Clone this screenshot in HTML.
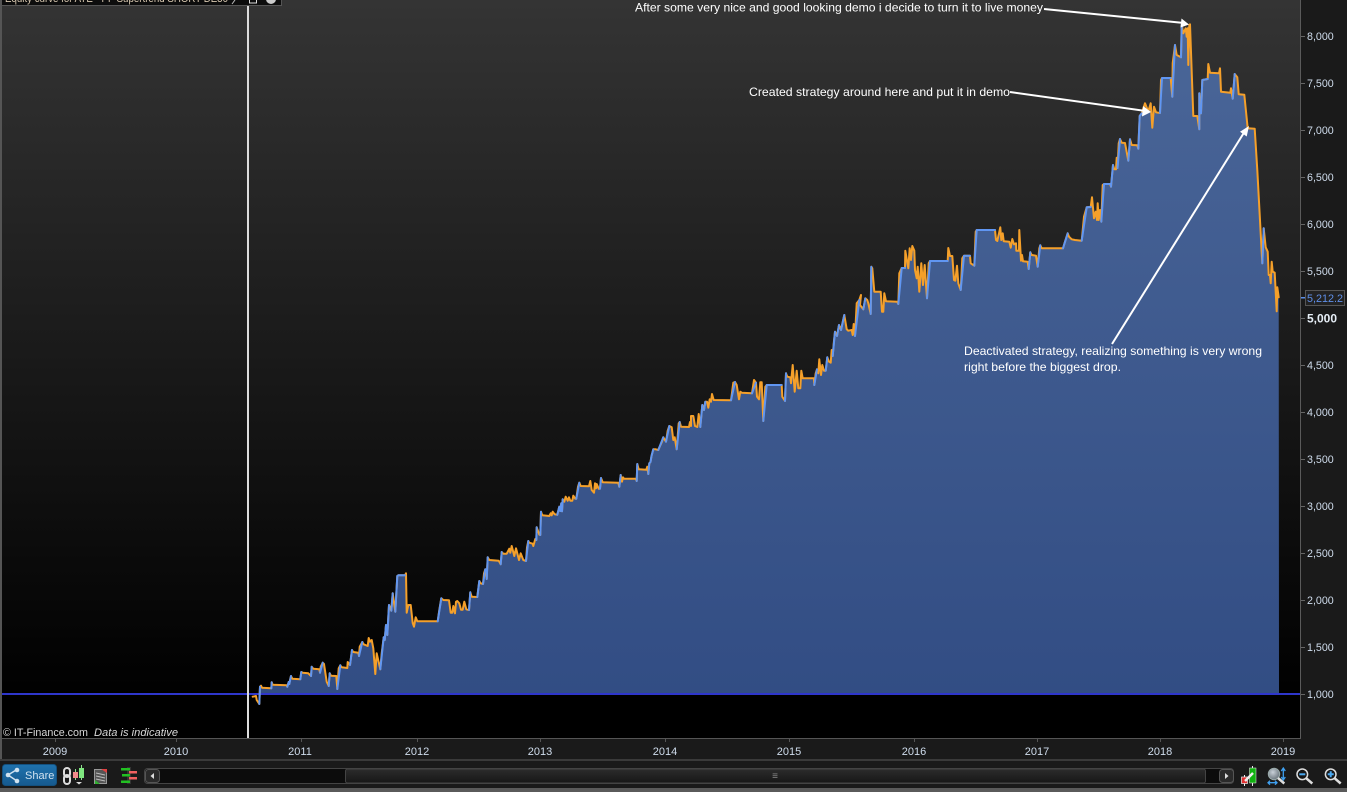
<!DOCTYPE html>
<html>
<head>
<meta charset="utf-8">
<style>
html,body{margin:0;padding:0;background:#1a1a1a;width:1347px;height:792px;overflow:hidden;font-family:"Liberation Sans",sans-serif}
svg{position:absolute;left:0;top:0;display:block}
</style>
</head>
<body>
<svg width="1347" height="792" viewBox="0 0 1347 792" xmlns="http://www.w3.org/2000/svg" font-family="'Liberation Sans',sans-serif">
<defs>
<linearGradient id="bg" gradientUnits="userSpaceOnUse" x1="0" y1="0" x2="0" y2="700"><stop offset="0" stop-color="#343434"/><stop offset="1" stop-color="#000"/></linearGradient>
<linearGradient id="area" gradientUnits="userSpaceOnUse" x1="0" y1="24" x2="0" y2="694"><stop offset="0" stop-color="#4a6698"/><stop offset="1" stop-color="#324d84"/></linearGradient>
<linearGradient id="share" x1="0" y1="0" x2="0" y2="1"><stop offset="0" stop-color="#1f72ad"/><stop offset="1" stop-color="#165a8f"/></linearGradient>
<linearGradient id="thumb" x1="0" y1="0" x2="0" y2="1"><stop offset="0" stop-color="#2c2c2c"/><stop offset="1" stop-color="#171717"/></linearGradient>
<radialGradient id="glass" cx=".4" cy=".35" r=".7"><stop offset="0" stop-color="#c8d0d8"/><stop offset="1" stop-color="#667078"/></radialGradient>
</defs>

<!-- panels -->
<rect width="1347" height="792" fill="#1a1a1a"/>
<rect x="2" y="0" width="1298" height="738" fill="url(#bg)"/>
<rect x="0" y="0" width="2" height="760" fill="#555"/>
<rect x="1300" y="0" width="1" height="739" fill="#5a5a5a"/>
<rect x="0" y="738" width="1301" height="1" fill="#555"/>
<rect x="0" y="759" width="1347" height="2" fill="#3a3a3a"/>
<rect x="0" y="788" width="1347" height="4" fill="#5a5a5a"/>

<!-- title strip -->
<rect x="2" y="0" width="279" height="5" fill="#0d0d0d"/>
<rect x="2" y="5" width="280" height="1" fill="#555"/>
<rect x="281" y="0" width="1" height="6" fill="#555"/>
<text x="5" y="2" font-size="11" fill="#d8c8b0" textLength="223" lengthAdjust="spacingAndGlyphs">Equity curve for ATE - PF Supertrend SHORT DE30</text>
<path d="M232,4l3,-4" stroke="#bbb" fill="none"/>
<rect x="249.500" y="-4" width="7" height="7" fill="none" stroke="#ddd" stroke-width="1"/>
<circle cx="271" cy="-1" r="5" fill="#ccc"/>

<!-- area -->
<path fill="url(#area)" d="M260,694L260,686.7 261,685.7 262,687.7 271.3,688.3 271.7,682.3 272.7,684.7 286.7,685.3 287.3,686.7 288.7,682 289.3,684 290,680 291,676 292.3,678.7 300.3,679.3 301.3,672 302.7,672.7 308.3,673.3 311,676 311.7,666.7 313.3,668.7 319.3,669.3 320,672.7 320.7,666.7 322.7,662.7 324,664 326.7,681.7 328.7,686 329.7,673.3 331,675.7 336.3,676 337.3,689 338.7,668.3 340.3,665.3 341.7,667.3 347.3,668 347.7,662 350,665 352,650 353.3,652 358.3,652.7 359,656 359.7,646.7 362.3,642 363.7,644.3 367.7,646 368.7,638 370,641.7 371.7,640 373.3,648.3 375.3,674 376.7,653.3 380.3,669.3 381.7,653.3 383.7,637.3 384.7,640 386,625 387.3,635 389,605 391.3,610.7 392.7,593.3 395.3,611.7 397.3,576 398.3,575.3 405,575.3 406,573.3 406.7,612.7 408.3,605 410.7,605 412.7,623 414,626.7 415.7,617.3 417.3,621.3 437.7,621.3 439.3,610 441.3,598.3 443.3,600 449,600.3 450.7,612.7 452.3,612.7 453.3,606 455,613.3 456,601.7 457.3,601 459.3,603.3 461,609.7 462.7,609.7 464.3,601.7 466.3,609.3 469,610 470.3,592.3 471.7,596.7 477.3,597 479.3,581 480.7,583.3 483,584 484,573.3 485.3,569.3 486.7,579 487.7,557.3 489.3,560 498.7,560.7 500.7,564.3 501.7,552 503.3,553.7 506.7,553.7 509.3,548.7 510.3,552.7 511.7,546 514.3,556 516,548.3 519,560 520.7,553.3 523.3,560 526,561 527,547.3 528.3,541 529.3,542.7 532.7,543.7 533.3,546 535.3,539 536.3,540 536.7,527.3 539.3,534.7 540.3,535 541,511.7 542.3,515.3 549.3,516 550.7,513.3 551.7,515.3 552.7,511.7 554.7,514.3 557.3,514.7 559.3,506.7 560.3,511 561.3,503.3 562,511.3 562.7,499.3 564.3,501.7 565.7,496.7 567.7,500.7 569,497.3 570.3,500.7 572.3,500.7 573.3,495.7 575.3,498.7 576.3,498.7 578,486.7 579.3,482.7 580.7,486 589,486.3 590.3,481 591.7,490 594,492.7 595,483.3 596,488.3 596.7,484 598.7,488.7 600,488.7 601,478 602.7,482.3 618.3,482.7 619.3,486.7 620.7,475 622,481.7 623,477.3 624,478.7 635.7,478.7 636.7,481 637.3,464 638.7,469.3 646.3,469.7 647.3,466.7 648.3,474 649.3,463.3 650.5,462 651.5,456 653.3,449.3 655.7,449.3 658.3,450 660,446 662,441.7 663.3,437.3 666,441.7 667.7,430.7 669.3,426 671.7,427.3 673.3,440 674.7,437.3 676.7,449.3 678.7,423.3 679.7,422 681,426.7 689,427 690,422 691,426 691,416 693.3,416 695,426 697.3,427 698.7,414 700.3,427 702.3,405 704,410 705.3,401.7 707,401.7 708.3,407.7 709.7,399.3 711,401.7 712,394 713.7,400 731,400.3 733.3,382.7 735,382 736.7,385 739,399.3 740.3,391.7 741.7,392.7 752,393.3 754,380 756,382.7 757,396.7 759,399.3 760.3,382.3 761.7,382.3 763.3,421 765.3,386.7 766.7,385 781.7,385 782.3,396.7 785,401 786,373.3 787.3,376.7 790.3,377.3 791,383.3 792.7,365 794.7,391.7 796.7,370.7 798.3,388.3 800.3,388.3 801.3,370.7 802.7,378.3 814,378.3 814.3,385 815.7,373.3 817,369.3 818.3,373.3 819.3,359.3 821,375 822.3,365 824,370.7 825.7,370.7 827.3,357.3 829,361.7 830.7,362.7 831.7,350 832.7,356 834,340.7 835,331.7 837,336 839,325 841,330 844.3,315 846.7,329.3 848.3,330.7 851.7,330 852.7,335 853.7,324 855,336 856.7,303.3 859.3,300 861,295 860,305 863.3,309.3 865.3,298.3 867.3,300 868.3,303.3 870.7,314 871.3,266.7 872.3,268.3 874.3,291.7 880.7,291.7 882,311.7 883.3,311.7 884.3,293.3 886,301.3 897.3,301.7 898.3,304 899.3,273.3 901.7,268 905,268 905.3,250.7 908.3,268.3 909.7,248.3 911,260 912.3,246 914.3,250.7 915,270 916.7,278.3 917.7,266.7 919.3,291.7 921.3,263.3 923,285 924.7,265 927,298.3 928.7,263.3 930,261 947.7,261 948.3,248 950,256 952.3,256 954,280 955.3,280.7 957,265.7 958.3,283.3 960.7,290 962.3,258.3 964,255.7 970,255.7 970.7,263.3 974.3,265.7 975.7,231.7 976.7,230 995,230 996,240 997.3,241 1000.3,227.3 1001.3,240 1002.7,233.3 1003.7,241.3 1009.3,241.7 1010.7,247.7 1012.3,239 1014,244.3 1016,243.3 1016.3,250.7 1019,250.7 1019.3,230 1021,260.7 1022,255 1023,261.3 1027.7,261.7 1028.7,269 1030.3,252.3 1031.7,255 1036,255.7 1037.7,266.7 1039.3,248.3 1040.3,245.3 1041.7,248.3 1063,248.3 1065,241.7 1067.7,233.3 1069,236.7 1071.7,239.3 1075,240 1081.7,240.7 1084,216.7 1086.7,207.3 1090.7,207 1092,197.3 1094,218.3 1095.7,211.7 1097,220 1097.7,203.3 1098.7,220 1100,210 1101.3,221.7 1102.7,185 1104,184 1110,184 1111,186.7 1111.7,179.3 1113,165 1114.3,169.3 1116,169.3 1116.7,157.7 1117.5,168 1118.7,143.3 1120,139 1121.7,142.7 1125,143 1128.3,160.7 1130,139.3 1131.7,145 1137.3,145.3 1138.3,148.7 1139.7,116 1141.7,113.3 1145,103.3 1148.3,111.7 1150.7,103.3 1152.3,127.7 1154,106.7 1156,112.3 1160,113 1161,80 1162,78 1170.7,78 1172.3,96.7 1172.7,63.3 1175,45 1176.7,55 1181,57.3 1181.7,25 1183.3,33.3 1185.7,28.3 1186.7,36.7 1187.7,28.3 1188.3,65 1189.3,25 1190,24.3 1193.3,116 1197.3,116 1199.3,129.3 1199.3,93.3 1201,113.3 1202.3,80 1207.7,79 1208.3,64 1210,72.7 1219,73.3 1220,68.3 1221,91.7 1230.3,92.7 1231,88.3 1232.7,98.7 1234.7,74 1237.3,77.3 1238.7,94.3 1244.3,94.7 1247.7,128.3 1254.7,128.7 1257.3,170 1262.3,263.3 1263.7,228.3 1265.7,247.3 1267.7,251.7 1268.7,275 1270,275 1270.7,283.3 1271.7,261.7 1272.7,271.7 1274.7,272.7 1276.7,311.3 1277.3,287.3 1278.7,297.3 1279,694Z"/>

<!-- base line -->
<rect x="2" y="693" width="1298" height="2" fill="#2e36cc"/>

<!-- equity line, orange -->
<path fill="none" stroke="#f5a02a" stroke-width="2" stroke-linejoin="round" stroke-linecap="round" d="M252.7,696.7L256,696 256.7,700 259.3,704 260,686.7 261,685.7 262,687.7 271.3,688.3 271.7,682.3 272.7,684.7 286.7,685.3 287.3,686.7 288.7,682 289.3,684 290,680 291,676 292.3,678.7 300.3,679.3 301.3,672 302.7,672.7 308.3,673.3 311,676 311.7,666.7 313.3,668.7 319.3,669.3 320,672.7 320.7,666.7 322.7,662.7 324,664 326.7,681.7 328.7,686 329.7,673.3 331,675.7 336.3,676 337.3,689 338.7,668.3 340.3,665.3 341.7,667.3 347.3,668 347.7,662 350,665 352,650 353.3,652 358.3,652.7 359,656 359.7,646.7 362.3,642 363.7,644.3 367.7,646 368.7,638 370,641.7 371.7,640 373.3,648.3 375.3,674 376.7,653.3 380.3,669.3 381.7,653.3 383.7,637.3 384.7,640 386,625 387.3,635 389,605 391.3,610.7 392.7,593.3 395.3,611.7 397.3,576 398.3,575.3 405,575.3 406,573.3 406.7,612.7 408.3,605 410.7,605 412.7,623 414,626.7 415.7,617.3 417.3,621.3 437.7,621.3 439.3,610 441.3,598.3 443.3,600 449,600.3 450.7,612.7 452.3,612.7 453.3,606 455,613.3 456,601.7 457.3,601 459.3,603.3 461,609.7 462.7,609.7 464.3,601.7 466.3,609.3 469,610 470.3,592.3 471.7,596.7 477.3,597 479.3,581 480.7,583.3 483,584 484,573.3 485.3,569.3 486.7,579 487.7,557.3 489.3,560 498.7,560.7 500.7,564.3 501.7,552 503.3,553.7 506.7,553.7 509.3,548.7 510.3,552.7 511.7,546 514.3,556 516,548.3 519,560 520.7,553.3 523.3,560 526,561 527,547.3 528.3,541 529.3,542.7 532.7,543.7 533.3,546 535.3,539 536.3,540 536.7,527.3 539.3,534.7 540.3,535 541,511.7 542.3,515.3 549.3,516 550.7,513.3 551.7,515.3 552.7,511.7 554.7,514.3 557.3,514.7 559.3,506.7 560.3,511 561.3,503.3 562,511.3 562.7,499.3 564.3,501.7 565.7,496.7 567.7,500.7 569,497.3 570.3,500.7 572.3,500.7 573.3,495.7 575.3,498.7 576.3,498.7 578,486.7 579.3,482.7 580.7,486 589,486.3 590.3,481 591.7,490 594,492.7 595,483.3 596,488.3 596.7,484 598.7,488.7 600,488.7 601,478 602.7,482.3 618.3,482.7 619.3,486.7 620.7,475 622,481.7 623,477.3 624,478.7 635.7,478.7 636.7,481 637.3,464 638.7,469.3 646.3,469.7 647.3,466.7 648.3,474 649.3,463.3 650.5,462 651.5,456 653.3,449.3 655.7,449.3 658.3,450 660,446 662,441.7 663.3,437.3 666,441.7 667.7,430.7 669.3,426 671.7,427.3 673.3,440 674.7,437.3 676.7,449.3 678.7,423.3 679.7,422 681,426.7 689,427 690,422 691,426 691,416 693.3,416 695,426 697.3,427 698.7,414 700.3,427 702.3,405 704,410 705.3,401.7 707,401.7 708.3,407.7 709.7,399.3 711,401.7 712,394 713.7,400 731,400.3 733.3,382.7 735,382 736.7,385 739,399.3 740.3,391.7 741.7,392.7 752,393.3 754,380 756,382.7 757,396.7 759,399.3 760.3,382.3 761.7,382.3 763.3,421 765.3,386.7 766.7,385 781.7,385 782.3,396.7 785,401 786,373.3 787.3,376.7 790.3,377.3 791,383.3 792.7,365 794.7,391.7 796.7,370.7 798.3,388.3 800.3,388.3 801.3,370.7 802.7,378.3 814,378.3 814.3,385 815.7,373.3 817,369.3 818.3,373.3 819.3,359.3 821,375 822.3,365 824,370.7 825.7,370.7 827.3,357.3 829,361.7 830.7,362.7 831.7,350 832.7,356 834,340.7 835,331.7 837,336 839,325 841,330 844.3,315 846.7,329.3 848.3,330.7 851.7,330 852.7,335 853.7,324 855,336 856.7,303.3 859.3,300 861,295 860,305 863.3,309.3 865.3,298.3 867.3,300 868.3,303.3 870.7,314 871.3,266.7 872.3,268.3 874.3,291.7 880.7,291.7 882,311.7 883.3,311.7 884.3,293.3 886,301.3 897.3,301.7 898.3,304 899.3,273.3 901.7,268 905,268 905.3,250.7 908.3,268.3 909.7,248.3 911,260 912.3,246 914.3,250.7 915,270 916.7,278.3 917.7,266.7 919.3,291.7 921.3,263.3 923,285 924.7,265 927,298.3 928.7,263.3 930,261 947.7,261 948.3,248 950,256 952.3,256 954,280 955.3,280.7 957,265.7 958.3,283.3 960.7,290 962.3,258.3 964,255.7 970,255.7 970.7,263.3 974.3,265.7 975.7,231.7 976.7,230 995,230 996,240 997.3,241 1000.3,227.3 1001.3,240 1002.7,233.3 1003.7,241.3 1009.3,241.7 1010.7,247.7 1012.3,239 1014,244.3 1016,243.3 1016.3,250.7 1019,250.7 1019.3,230 1021,260.7 1022,255 1023,261.3 1027.7,261.7 1028.7,269 1030.3,252.3 1031.7,255 1036,255.7 1037.7,266.7 1039.3,248.3 1040.3,245.3 1041.7,248.3 1063,248.3 1065,241.7 1067.7,233.3 1069,236.7 1071.7,239.3 1075,240 1081.7,240.7 1084,216.7 1086.7,207.3 1090.7,207 1092,197.3 1094,218.3 1095.7,211.7 1097,220 1097.7,203.3 1098.7,220 1100,210 1101.3,221.7 1102.7,185 1104,184 1110,184 1111,186.7 1111.7,179.3 1113,165 1114.3,169.3 1116,169.3 1116.7,157.7 1117.5,168 1118.7,143.3 1120,139 1121.7,142.7 1125,143 1128.3,160.7 1130,139.3 1131.7,145 1137.3,145.3 1138.3,148.7 1139.7,116 1141.7,113.3 1145,103.3 1148.3,111.7 1150.7,103.3 1152.3,127.7 1154,106.7 1156,112.3 1160,113 1161,80 1162,78 1170.7,78 1172.3,96.7 1172.7,63.3 1175,45 1176.7,55 1181,57.3 1181.7,25 1183.3,33.3 1185.7,28.3 1186.7,36.7 1187.7,28.3 1188.3,65 1189.3,25 1190,24.3 1193.3,116 1197.3,116 1199.3,129.3 1199.3,93.3 1201,113.3 1202.3,80 1207.7,79 1208.3,64 1210,72.7 1219,73.3 1220,68.3 1221,91.7 1230.3,92.7 1231,88.3 1232.7,98.7 1234.7,74 1237.3,77.3 1238.7,94.3 1244.3,94.7 1247.7,128.3 1254.7,128.7 1257.3,170 1262.3,263.3 1263.7,228.3 1265.7,247.3 1267.7,251.7 1268.7,275 1270,275 1270.7,283.3 1271.7,261.7 1272.7,271.7 1274.7,272.7 1276.7,311.3 1277.3,287.3 1278.7,297.3"/>

<!-- equity line, blue rises -->
<path fill="none" stroke="#6096f2" stroke-width="2" stroke-linejoin="round" stroke-linecap="round" d="M259.3,704L260,686.7M271.3,688.3L271.7,682.3M287.3,686.7L288.7,682M289.3,684L291,676M300.3,679.3L301.3,672M311,676L311.7,666.7M320,672.7L322.7,662.7M328.7,686L329.7,673.3M337.3,689L340.3,665.3M350,665L352,650M359,656L362.3,642M380.3,669.3L383.7,637.3M384.7,640L386,625M387.3,635L389,605M391.3,610.7L392.7,593.3M395.3,611.7L397.3,576 398.3,575.3 405,575.3M437.7,621.3L441.3,598.3M469,610L470.3,592.3M477.3,597L479.3,581M483,584L485.3,569.3M486.7,579L487.7,557.3M500.7,564.3L501.7,552M526,561L528.3,541M536.3,540L536.7,527.3M540.3,535L541,511.7M557.3,514.7L559.3,506.7M560.3,511L561.3,503.3M562,511.3L562.7,499.3M576.3,498.7L579.3,482.7M600,488.7L601,478M619.3,486.7L620.7,475M636.7,481L637.3,464M648.3,474L649.3,463.3 650.5,462 651.5,456 653.3,449.3M658.3,450L663.3,437.3M666,441.7L669.3,426M676.7,449.3L679.7,422M700.3,427L702.3,405M704,410L705.3,401.7M731,400.3L735,382M752,393.3L756,382.7M763.3,421L766.7,385 781.7,385M785,401L786,373.3M814.3,385L817,369.3M825.7,370.7L827.3,357.3M832.7,356L835,331.7M837,336L839,325M841,330L844.3,315M855,336L859.3,300M863.3,309.3L865.3,298.3M870.7,314L871.3,266.7M898.3,304L901.7,268 905,268M927,298.3L930,261 947.7,261M960.7,290L964,255.7 970,255.7M974.3,265.7L976.7,230 995,230M1028.7,269L1030.3,252.3M1037.7,266.7L1040.3,245.3M1063,248.3L1067.7,233.3M1081.7,240.7L1086.7,207.3 1090.7,207M1101.3,221.7L1104,184 1110,184M1111,186.7L1113,165M1117.5,168L1120,139M1128.3,160.7L1130,139.3M1138.3,148.7L1139.7,116 1141.7,113.3M1160,113L1162,78 1170.7,78M1172.3,96.7L1175,45M1181,57.3L1181.7,25M1199.3,129.3L1199.3,93.3M1201,113.3L1202.3,80 1207.7,79M1232.7,98.7L1234.7,74M1262.3,263.3L1263.7,228.3"/>

<!-- white cursor line -->
<rect x="247" y="6" width="2" height="732" fill="#dcdcdc"/>

<!-- annotations -->
<g fill="#fff" font-size="12">
<text x="635" y="11.500" textLength="408" lengthAdjust="spacingAndGlyphs">After some very nice and good looking demo i decide to turn it to live money</text>
<text x="749" y="96" textLength="261" lengthAdjust="spacingAndGlyphs">Created strategy around here and put it in demo</text>
<text x="964" y="355" textLength="298" lengthAdjust="spacingAndGlyphs">Deactivated strategy, realizing something is very wrong</text>
<text x="964" y="371" textLength="157" lengthAdjust="spacingAndGlyphs">right before the biggest drop.</text>
</g>
<g stroke="#fff" stroke-width="2" fill="none">
<path d="M1044,9L1184,23"/>
<path d="M1010,92L1146,111"/>
<path d="M1112,344L1245,131"/>
</g>
<g fill="#fff">
<path d="M1189,24.500L1181.500,18.500 1180.500,27.500Z"/>
<path d="M1151,112L1143,106 1142,116.500Z"/>
<path d="M1249,126L1240,131.700 1246.700,136.500Z"/>
</g>

<!-- footer note -->
<text x="3" y="736" font-size="11" fill="#d8d8d8" textLength="85" lengthAdjust="spacingAndGlyphs">© IT-Finance.com</text>
<text x="94" y="736" font-size="11" font-style="italic" fill="#d8d8d8" textLength="84" lengthAdjust="spacingAndGlyphs">Data is indicative</text>

<!-- y axis -->
<path fill="none" stroke="#666" d="M1301,36.500h4M1301,83.500h4M1301,130.500h4M1301,177.500h4M1301,224.500h4M1301,271.500h4M1301,318.500h4M1301,365.500h4M1301,412.500h4M1301,459.500h4M1301,506.500h4M1301,553.500h4M1301,600.500h4M1301,647.500h4M1301,694.500h4"/>
<g fill="#cfdcec" font-size="10.700">
<text x="1307" y="40">8,000</text>
<text x="1307" y="87">7,500</text>
<text x="1307" y="134">7,000</text>
<text x="1307" y="181">6,500</text>
<text x="1307" y="228">6,000</text>
<text x="1307" y="275">5,500</text>
<text x="1307" y="322.500" font-size="12" font-weight="bold" fill="#e6eef6">5,000</text>
<text x="1307" y="369">4,500</text>
<text x="1307" y="416">4,000</text>
<text x="1307" y="463">3,500</text>
<text x="1307" y="510">3,000</text>
<text x="1307" y="557">2,500</text>
<text x="1307" y="604">2,000</text>
<text x="1307" y="651">1,500</text>
<text x="1307" y="698">1,000</text>
</g>
<rect x="1305.500" y="290.500" width="39" height="15" fill="#222" stroke="#555"/>
<rect x="1301" y="297" width="4" height="1.500" fill="#5b8ee8"/>
<text x="1307" y="302" font-size="11" fill="#5f8fe8" textLength="36" lengthAdjust="spacingAndGlyphs">5,212.2</text>

<!-- x axis -->
<path fill="none" stroke="#555" d="M55.500,739v3M176.500,739v3M301.500,739v3M417.500,739v3M540.500,739v3M665.500,739v3M789.500,739v3M914.500,739v3M1037.500,739v3M1160.500,739v3M1283.500,739v3"/>
<g fill="#cfdcec" font-size="11" text-anchor="middle">
<text x="55" y="755">2009</text>
<text x="176" y="755">2010</text>
<text x="300" y="755">2011</text>
<text x="417" y="755">2012</text>
<text x="540" y="755">2013</text>
<text x="665" y="755">2014</text>
<text x="789" y="755">2015</text>
<text x="914" y="755">2016</text>
<text x="1037" y="755">2017</text>
<text x="1160" y="755">2018</text>
<text x="1283" y="755">2019</text>
</g>

<!-- share button -->
<rect x="2.500" y="764.500" width="54" height="21" rx="3" fill="url(#share)" stroke="#14507e"/>
<g fill="#cfe2f0" stroke="#cfe2f0">
<path d="M8,775L17,769.500M8,775L17,781" fill="none" stroke-width="1.500"/>
<circle cx="8" cy="775" r="2.300" stroke="none"/>
<circle cx="17" cy="770" r="2.300" stroke="none"/>
<circle cx="17" cy="781" r="2.300" stroke="none"/>
</g>
<text x="25" y="779" font-size="11" fill="#cfe2f0">Share</text>

<!-- link + candle icon -->
<rect x="64" y="768" width="6" height="9" rx="3" fill="none" stroke="#ddd" stroke-width="2"/>
<rect x="64" y="775" width="6" height="9" rx="3" fill="none" stroke="#ddd" stroke-width="2"/>
<path d="M81.500,765v15M75.500,769v11" stroke="#8fe08f"/>
<rect x="73" y="772" width="5" height="6" fill="#f08a8a"/>
<rect x="79" y="768" width="5" height="10" fill="#7fe67f"/>
<path d="M76,782h6l-3,2.500z" fill="#ddd"/>

<!-- list icon -->
<rect x="94.500" y="769.500" width="12" height="14" fill="#555" stroke="#999"/>
<path d="M96,773l9,2M96,776l9,2M96,779l9,2" stroke="#bbb"/>
<path d="M101,769h6v4z" fill="#e04040"/>
<path d="M95,784v-4l5,4z" fill="#30b030"/>

<!-- bars icon -->
<rect x="127" y="767" width="4" height="17" fill="#333"/>
<rect x="121" y="768" width="9" height="2.500" fill="#22c022"/>
<rect x="129" y="771" width="8" height="2.500" fill="#f06060"/>
<rect x="122" y="774" width="8" height="2.500" fill="#22c022"/>
<rect x="129" y="777" width="8" height="2.500" fill="#f06060"/>
<rect x="121" y="780.500" width="9" height="2.500" fill="#22c022"/>

<!-- scrollbar -->
<rect x="144.500" y="768.500" width="1089" height="15" rx="3" fill="#0c0c0c" stroke="#444"/>
<rect x="145.500" y="769.500" width="14" height="13" rx="3" fill="#2a2a2a" stroke="#555"/>
<path d="M154,773v6l-3.500,-3z" fill="#ddd"/>
<rect x="345.500" y="769" width="860" height="14" rx="2" fill="url(#thumb)" stroke="#444"/>
<text x="775" y="779" font-size="10" fill="#888" text-anchor="middle">≡</text>
<rect x="1219.500" y="769.500" width="14" height="13" rx="3" fill="#2a2a2a" stroke="#555"/>
<path d="M1225,773v6l3.500,-3z" fill="#ddd"/>

<!-- candle + wrench icon -->
<path d="M1244.500,775v11M1252.500,766v20" stroke="#eee"/>
<rect x="1241.500" y="777" width="6" height="6.500" fill="#e03030" stroke="#eee" stroke-width=".7"/>
<rect x="1249.500" y="768" width="6.500" height="15" fill="#10b010" stroke="#eee" stroke-width=".5"/>
<path d="M1245,781L1253,773" stroke="#eee" stroke-width="2.500"/>

<!-- magnifier with arrows -->
<circle cx="1274" cy="774" r="5.700" fill="url(#glass)" stroke="#9aa"/>
<path d="M1278,778L1284.300,783.500" stroke="#ddd" stroke-width="2.500"/>
<path d="M1283.300,769v10M1281.300,771l2,-3 2,3M1281.300,777l2,3 2,-3" fill="none" stroke="#3fa0f0" stroke-width="1.300"/>
<path d="M1268,782.700h9M1270,780.700l-2,2 2,2M1275,780.700l2,2 -2,2" fill="none" stroke="#3fa0f0" stroke-width="1.300"/>

<!-- zoom out -->
<circle cx="1302.300" cy="774.300" r="5.300" fill="#161616" stroke="#ddd" stroke-width="1.500"/>
<path d="M1299.300,774.300h6" stroke="#4aa8f0" stroke-width="2"/>
<path d="M1306.300,778.300L1312.300,783.500" stroke="#ddd" stroke-width="2.500"/>

<!-- zoom in -->
<circle cx="1330.700" cy="774.300" r="5.300" fill="#161616" stroke="#ddd" stroke-width="1.500"/>
<path d="M1327.700,774.300h6M1330.700,771.300v6" stroke="#4aa8f0" stroke-width="2"/>
<path d="M1334.700,778.300L1340.700,783.500" stroke="#ddd" stroke-width="2.500"/>
</svg>
</body>
</html>
